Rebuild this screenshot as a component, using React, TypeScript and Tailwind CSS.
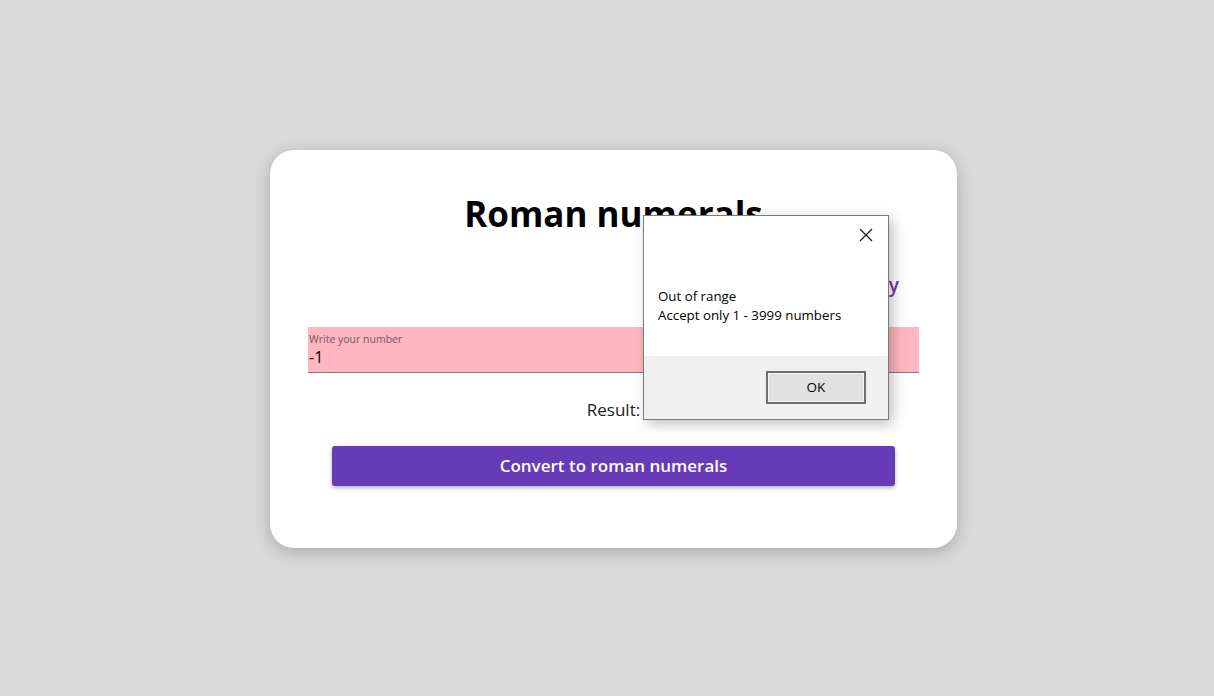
import React, { useState } from 'react';

const font = { fontFamily: '"Open Sans", "Noto Sans", Arial, sans-serif' };

const AlertDialog: React.FC<{ onClose: () => void }> = ({ onClose }) => (
    <div
        className="absolute left-[643px] top-[215px] w-[246px] h-[205px] flex flex-col bg-white border border-[#7a7a7a] shadow-[4px_4px_12px_rgba(0,0,0,0.25)]"
        style={font}
    >
        <div className="flex-1 relative">
            <button onClick={onClose} className="absolute right-[14px] top-[11px] w-[16px] h-[16px] flex items-center justify-center">
                <svg width="14" height="14" viewBox="0 0 14 14" fill="none" stroke="#111" strokeWidth="1.1">
                    <path d="M1 1 L13 13 M13 1 L1 13" />
                </svg>
            </button>
            <div className="pt-[71px] pl-[14px] text-[13.3px] leading-[19px] text-black">
                <p>Out of range</p>
                <p>Accept only 1 - 3999 numbers</p>
            </div>
        </div>
        <div className="h-[63px] bg-[#f0f0f0] flex justify-end items-start pt-[15px] pr-[22px]">
            <button
                onClick={onClose}
                className="w-[100px] h-[33px] bg-[#e1e1e1] border-2 border-[#6f6f6f] shadow-[inset_0_0_0_1px_#f5f5f5] text-[13.5px] text-black"
            >
                OK
            </button>
        </div>
    </div>
);

export default function App() {
    const [value, setValue] = useState('-1');
    const [showAlert, setShowAlert] = useState(true);

    return (
        <div className="relative min-h-[696px] w-full bg-[#d9d9d9] flex items-center justify-center pl-[13px] pt-[2px]" style={font}>
            <div className="w-[687px] h-[398px] bg-white rounded-[24px] shadow-[0_4px_16px_rgba(0,0,0,0.22)] px-[38px] pt-[39px] flex flex-col">
                <h1 className="text-center text-[35px] font-bold leading-[50px] text-black">Roman numerals</h1>
                <div className="flex justify-end pr-[20px] mt-[33px]">
                    <a href="#" className="text-[19px] font-semibold leading-[26px] text-[#673ab7]">History</a>
                </div>
                <div className="mt-[29px] h-[46px] bg-[#ffb6c1] border-b border-[#7a7a7a] flex flex-col pl-[1px] pt-[6px]">
                    <label className="text-[10.5px] leading-[13px] text-[#6b5b5e]">Write your number</label>
                    <input
                        value={value}
                        onChange={(e) => setValue(e.target.value)}
                        className="bg-transparent outline-none text-[16px] leading-[22px] text-black"
                    />
                </div>
                <p className="mt-[25px] text-center text-[17px] leading-[24px] text-[#222]">Result: </p>
                <button
                    onClick={() => setShowAlert(true)}
                    className="mt-[24px] mx-[24px] h-[40px] rounded-[3px] bg-[#673ab7] text-white text-[17px] font-semibold shadow-[0_2px_4px_rgba(0,0,0,0.3)]"
                >
                    Convert to roman numerals
                </button>
            </div>
            {showAlert && <AlertDialog onClose={() => setShowAlert(false)} />}
        </div>
    );
}
